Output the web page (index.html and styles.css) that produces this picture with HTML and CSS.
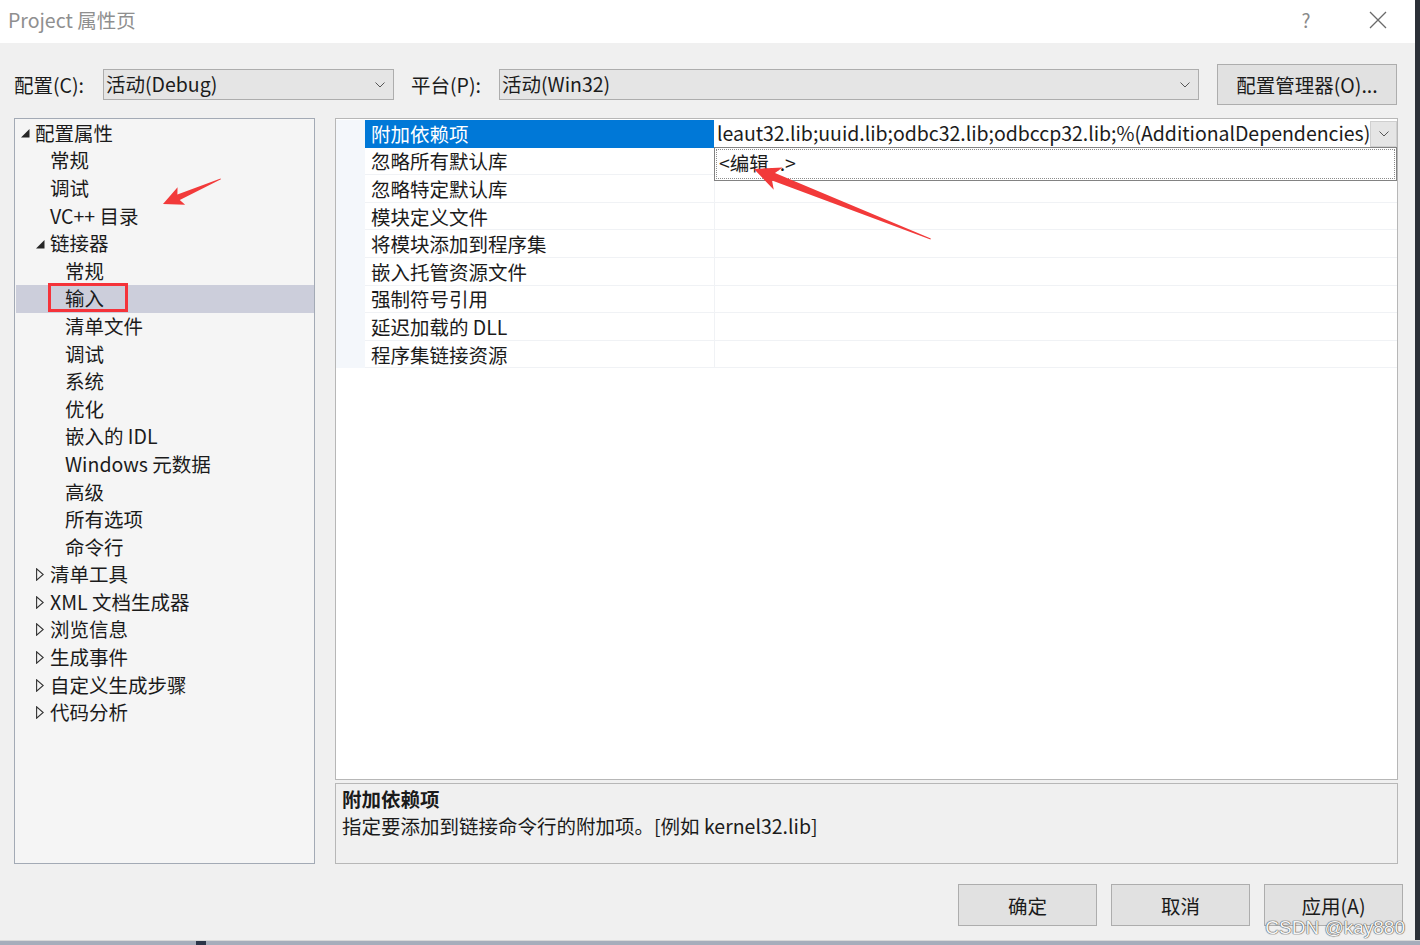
FILE: index.html
```html
<!DOCTYPE html>
<html lang="zh-CN">
<head>
<meta charset="utf-8">
<title>Project 属性页</title>
<link rel="stylesheet" href="styles.css">
</head>
<body>
<div class="screen">
  <div class="window">
    <div class="titlebar">
      <span class="title">Project 属性页</span>
      <span class="tb-btn help">?</span>
      <span class="tb-btn close"><svg width="18" height="18" viewBox="0 0 18 18"><path d="M1 1L17 17M17 1L1 17" stroke="#6a6a6a" stroke-width="1.3" fill="none"/></svg></span>
    </div>
    <div class="body">
      <div class="toolbar">
        <span class="label label-cfg">配置(C):</span>
        <div class="combo combo-config"><span>活动(Debug)</span><svg class="chev" width="10" height="6" viewBox="0 0 10 6"><path d="M0.5 0.5L5 5L9.5 0.5" stroke="#555" stroke-width="1" fill="none"/></svg></div>
        <span class="label label-plat">平台(P):</span>
        <div class="combo combo-plat"><span>活动(Win32)</span><svg class="chev" width="10" height="6" viewBox="0 0 10 6"><path d="M0.5 0.5L5 5L9.5 0.5" stroke="#555" stroke-width="1" fill="none"/></svg></div>
        <button class="btn btn-mgr">配置管理器(O)...</button>
      </div>
      <div class="main">
        <div class="tree">
          <div class="node l0"><svg class="tri" width="9" height="9" viewBox="0 0 9 9"><path d="M8.5 0V8.5H0Z" fill="#262626"/></svg><span>配置属性</span></div>
          <div class="node l1"><span>常规</span></div>
          <div class="node l1"><span>调试</span></div>
          <div class="node l1"><span>VC++ 目录</span></div>
          <div class="node l1"><svg class="tri" width="9" height="9" viewBox="0 0 9 9"><path d="M8.5 0V8.5H0Z" fill="#262626"/></svg><span>链接器</span></div>
          <div class="node l2"><span>常规</span></div>
          <div class="node l2 selected"><span>输入</span><i class="redbox"></i></div>
          <div class="node l2"><span>清单文件</span></div>
          <div class="node l2"><span>调试</span></div>
          <div class="node l2"><span>系统</span></div>
          <div class="node l2"><span>优化</span></div>
          <div class="node l2"><span>嵌入的 IDL</span></div>
          <div class="node l2"><span>Windows 元数据</span></div>
          <div class="node l2"><span>高级</span></div>
          <div class="node l2"><span>所有选项</span></div>
          <div class="node l2"><span>命令行</span></div>
          <div class="node l1 col"><svg class="tri" width="8" height="13" viewBox="0 0 8 13"><path d="M0.6 0.8V12.2L7.2 6.5Z" fill="none" stroke="#333" stroke-width="1.1"/></svg><span>清单工具</span></div>
          <div class="node l1 col"><svg class="tri" width="8" height="13" viewBox="0 0 8 13"><path d="M0.6 0.8V12.2L7.2 6.5Z" fill="none" stroke="#333" stroke-width="1.1"/></svg><span>XML 文档生成器</span></div>
          <div class="node l1 col"><svg class="tri" width="8" height="13" viewBox="0 0 8 13"><path d="M0.6 0.8V12.2L7.2 6.5Z" fill="none" stroke="#333" stroke-width="1.1"/></svg><span>浏览信息</span></div>
          <div class="node l1 col"><svg class="tri" width="8" height="13" viewBox="0 0 8 13"><path d="M0.6 0.8V12.2L7.2 6.5Z" fill="none" stroke="#333" stroke-width="1.1"/></svg><span>生成事件</span></div>
          <div class="node l1 col"><svg class="tri" width="8" height="13" viewBox="0 0 8 13"><path d="M0.6 0.8V12.2L7.2 6.5Z" fill="none" stroke="#333" stroke-width="1.1"/></svg><span>自定义生成步骤</span></div>
          <div class="node l1 col"><svg class="tri" width="8" height="13" viewBox="0 0 8 13"><path d="M0.6 0.8V12.2L7.2 6.5Z" fill="none" stroke="#333" stroke-width="1.1"/></svg><span>代码分析</span></div>
        </div>
        <div class="right">
          <div class="grid">
            <div class="rows">
              <div class="row sel"><div class="gut"></div><div class="name">附加依赖项</div><div class="val"><span class="vtext">leaut32.lib;uuid.lib;odbc32.lib;odbccp32.lib;%(AdditionalDependencies)</span><span class="vbtn"><svg width="10" height="6" viewBox="0 0 10 6"><path d="M0.5 0.5L5 5L9.5 0.5" stroke="#555" stroke-width="1" fill="none"/></svg></span></div></div>
              <div class="row"><div class="gut"></div><div class="name">忽略所有默认库</div><div class="val"></div></div>
              <div class="row"><div class="gut"></div><div class="name">忽略特定默认库</div><div class="val"></div></div>
              <div class="row"><div class="gut"></div><div class="name">模块定义文件</div><div class="val"></div></div>
              <div class="row"><div class="gut"></div><div class="name">将模块添加到程序集</div><div class="val"></div></div>
              <div class="row"><div class="gut"></div><div class="name">嵌入托管资源文件</div><div class="val"></div></div>
              <div class="row"><div class="gut"></div><div class="name">强制符号引用</div><div class="val"></div></div>
              <div class="row"><div class="gut"></div><div class="name">延迟加载的 DLL</div><div class="val"></div></div>
              <div class="row"><div class="gut"></div><div class="name">程序集链接资源</div><div class="val"></div></div>
            </div>
            <div class="popup"><span class="focus">&lt;编辑...&gt;</span></div>
          </div>
          <div class="desc">
            <div class="desc-title">附加依赖项</div>
            <div class="desc-text">指定要添加到链接命令行的附加项。[例如 kernel32.lib]</div>
          </div>
        </div>
      </div>
      <div class="buttons">
        <button class="btn btn-dlg">确定</button>
        <button class="btn btn-dlg">取消</button>
        <button class="btn btn-dlg">应用(A)</button>
      </div>
      <div class="watermark">CSDN @kay880</div>
    </div>
  </div>
  <div class="edge"></div>
</div>
<div class="taskbar"><i class="tb-mark"></i></div>
<svg class="arrows" width="1420" height="945" viewBox="0 0 1420 945">
  <polygon transform="translate(163,204) rotate(-23.5)" points="0,0 20,-9.5 17,-3 63,-0.4 63,0.4 17,3 20,9.5" fill="#f23a3a"/>
  <polygon transform="translate(754,169) rotate(21.6)" points="0,0 26,-12 21,-4 190,-0.5 190,0.5 21,4 26,12" fill="#f23a3a"/>
</svg>
</body>
</html>
```

FILE: styles.css
```css
* { box-sizing: border-box; }
html, body { margin: 0; padding: 0; }
body {
  width: 1420px;
  height: 945px;
  overflow: hidden;
  background: #f0f0f0;
  font-family: "Noto Sans CJK SC", "Noto Sans", sans-serif;
  color: #1b1b1b;
  position: relative;
}
.screen { display: flex; height: 940px; }
.window { width: 1415px; height: 940px; display: flex; flex-direction: column; background: #f0f0f0; }
.edge { width: 5px; background: #2c3038; }
.taskbar { height: 5px; background: #a6adbb; position: relative; border-top: 1px solid #d8d8d8; }
.tb-mark { position: absolute; left: 196px; top: 0; width: 10px; height: 5px; background: #2c3548; }

.titlebar {
  height: 43px; background: #fff; display: flex; align-items: center;
  padding-left: 8px; font-size: 19.5px; color: #8f8f8f;
}
.title { flex: 1; position: relative; top: -2px; }
.tb-btn { display: flex; align-items: center; justify-content: center; }
.help { width: 20px; margin-right: 53px; color: #8a8a8a; font-size: 19px; position: relative; top: -2px; }
.close { width: 18px; margin-right: 28px; position: relative; top: -2px; }

.body { flex: 1; display: flex; flex-direction: column; position: relative; padding: 21px 18px 0 14px; font-size: 19.5px; }
.toolbar { height: 41px; display: flex; align-items: center; }
.label { white-space: nowrap; }
.label-cfg { width: 89px; }
.label-plat { width: 88px; margin-left: 17px; }
.combo {
  height: 31px; background: #e5e5e5; border: 1px solid #adadad;
  display: flex; align-items: center; justify-content: space-between;
  padding: 0 8px 0 2px;
}
.combo span { position: relative; top: -1px; }
.combo-config { width: 291px; }
.combo-plat { width: 700px; }
.btn {
  font-family: inherit; font-size: 19.5px; color: #1b1b1b;
  background: #e1e1e1; border: 1px solid #adadad; padding: 0; margin: 0;
}
.btn-mgr { width: 180px; height: 41px; margin-left: 18px; }

.main { display: flex; margin-top: 13px; height: 746px; gap: 20px; }
.tree {
  width: 301px; border: 1px solid #a3aab5; background: #f5f5f5;
  padding-top: 0.5px;
}
.node { height: 27.6px; display: flex; align-items: center; position: relative; white-space: nowrap; }
.node span { position: relative; top: -1px; }
.node.l0 { padding-left: 6px; }
.node.l0 .tri { margin-right: 5px; margin-top: 1px; }
.node.l1 { padding-left: 35px; }
.node.l1 .tri { margin-left: -14px; margin-right: 5px; margin-top: 1px; }
.node.l1.col .tri { margin-left: -14px; margin-right: 6px; margin-top: 0; }
.node.l2 { padding-left: 50px; }
.node.selected { background: #cccedb; margin: 0 0 0 1px; width: 298px; padding-left: 49px; }
.redbox { position: absolute; left: 32px; top: -2px; width: 80px; height: 29px; border: 3px solid #f5333a; }

.right { flex: 1; display: flex; flex-direction: column; gap: 3px; }
.grid { height: 662px; background: #fff; border: 1px solid #b7b7b7; position: relative; padding-top: 1px; }
.row { display: flex; height: 27.6px; }
.gut { width: 29px; background: #f4f7fb; }
.name {
  width: 349px; padding-left: 6px; display: flex; align-items: center;
  border-bottom: 1px solid #f0f2f5; white-space: nowrap;
}
.val { flex: 1; border-left: 1px solid #f0f2f5; border-bottom: 1px solid #f0f2f5; display: flex; align-items: center; }
.row.sel .name { background: #0078d7; color: #fff; border-bottom-color: #0078d7; }
.row.sel .val { border-left-color: #fff; padding-left: 2px; justify-content: space-between; border-bottom: none; }
.vtext { white-space: nowrap; position: relative; top: -1px; letter-spacing: -0.03px; }
.vbtn { width: 27px; height: 26px; background: #e5e5e5; border: 1px solid #cfcfcf; display: flex; align-items: center; justify-content: center; margin-top: 0; }
.popup {
  position: absolute; left: 378px; top: 28px; width: 683px; height: 34px;
  background: #fff; border: 1px solid #828282; padding: 1px;
}
.focus { display: block; height: 100%; border: 1px dotted #8c8c8c; padding-left: 2px; line-height: 25px; }

.desc { height: 81px; border: 1px solid #b7b7b7; background: #f0f0f0; padding: 1px 6px; line-height: 27px; }
.desc-title { font-weight: bold; }

.buttons { display: flex; justify-content: flex-end; gap: 14px; margin-top: 20px; margin-right: -6px; }
.btn-dlg { width: 139px; height: 42px; }

.watermark {
  position: absolute; right: 10px; bottom: 1px; font-family: "Liberation Sans", sans-serif;
  font-size: 19px; color: #f4f4f4;
  text-shadow: 0 0 1px #555, 0 0 1px #555, 0 0 1px #555;
}
.arrows { position: absolute; left: 0; top: 0; pointer-events: none; }
```
